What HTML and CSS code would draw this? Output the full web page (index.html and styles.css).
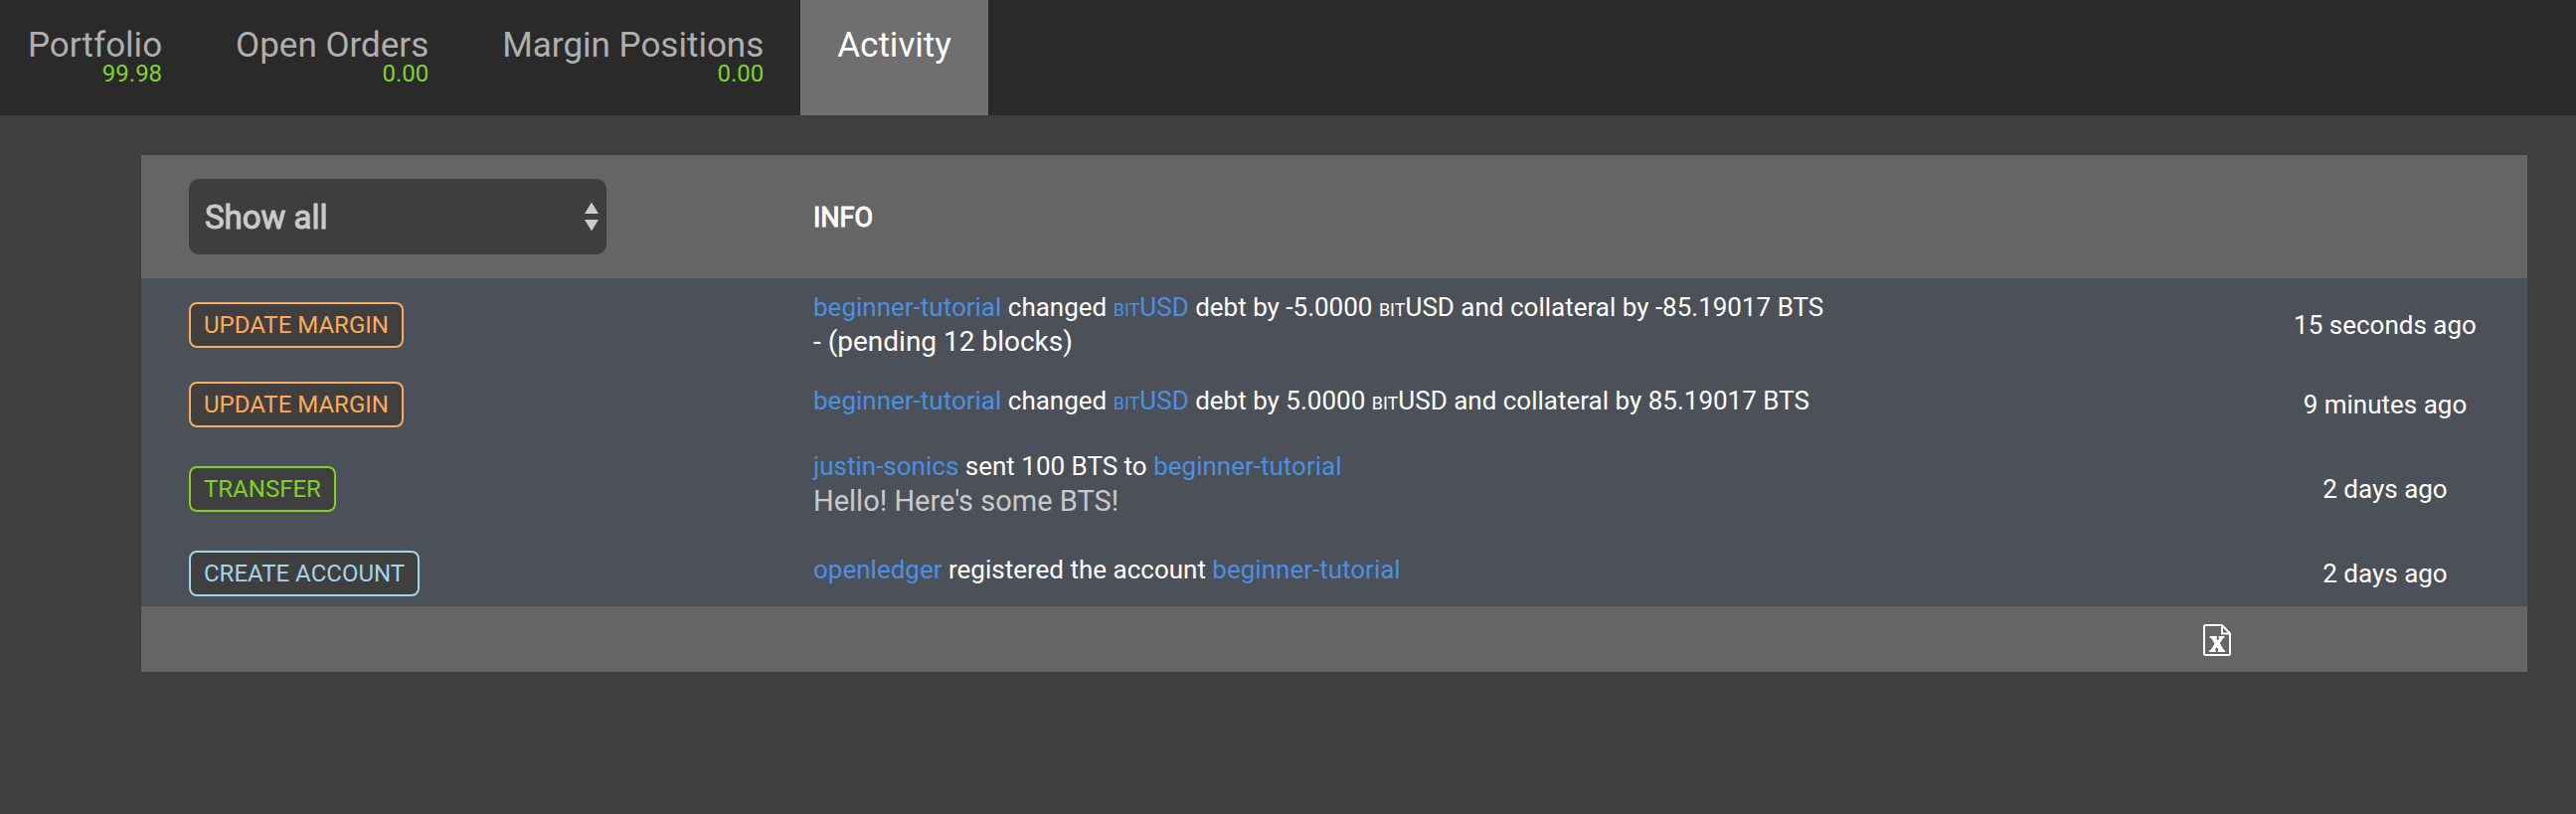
FILE: index.html
```html
<!DOCTYPE html>
<html lang="en">
<head>
<meta charset="utf-8">
<title>Account activity</title>
<link rel="stylesheet" href="styles.css">
</head>
<body>
<nav class="tabs">
  <a class="tab" href="#portfolio"><span class="tab-name">Portfolio</span><span class="tab-value">99.98</span></a>
  <a class="tab" href="#orders"><span class="tab-name">Open Orders</span><span class="tab-value">0.00</span></a>
  <a class="tab" href="#margin"><span class="tab-name">Margin Positions</span><span class="tab-value">0.00</span></a>
  <a class="tab tab-active" href="#activity" aria-current="page"><span class="tab-name">Activity</span></a>
</nav>
<main class="content">
  <table class="activity">
    <colgroup><col class="col-type"><col><col class="col-time"></colgroup>
    <thead>
      <tr>
        <th>
          <div class="filter">
            <select class="filter-select" aria-label="Filter operations">
              <option>Show all</option>
              <option>Transfer</option>
              <option>Update margin</option>
              <option>Create account</option>
            </select>
            <svg class="filter-arrows" viewBox="0 0 14 30" aria-hidden="true"><path d="M7 0.500 14 12H0zM0 18h14L7 29.500z"/></svg>
          </div>
        </th>
        <th class="info-head">INFO</th>
        <th></th>
      </tr>
    </thead>
    <tbody>
      <tr>
        <td class="type"><span class="badge badge-margin">UPDATE MARGIN</span></td>
        <td class="info info-double">
          <p class="line"><a href="#bt">beginner-tutorial</a> changed <a href="#usd"><span class="prefix">BIT</span>USD</a> debt by -5.0000 <span class="prefix">BIT</span>USD and collateral by -85.19017 BTS</p>
          <p class="subline">- (pending 12 blocks)</p>
        </td>
        <td class="time">15 seconds ago</td>
      </tr>
      <tr>
        <td class="type"><span class="badge badge-margin">UPDATE MARGIN</span></td>
        <td class="info">
          <p class="line"><a href="#bt">beginner-tutorial</a> changed <a href="#usd"><span class="prefix">BIT</span>USD</a> debt by 5.0000 <span class="prefix">BIT</span>USD and collateral by 85.19017 BTS</p>
        </td>
        <td class="time">9 minutes ago</td>
      </tr>
      <tr>
        <td class="type"><span class="badge badge-transfer">TRANSFER</span></td>
        <td class="info info-double">
          <p class="line"><a href="#js">justin-sonics</a> sent 100 BTS to <a href="#bt">beginner-tutorial</a></p>
          <p class="subline memo">Hello! Here's some BTS!</p>
        </td>
        <td class="time">2 days ago</td>
      </tr>
      <tr>
        <td class="type"><span class="badge badge-account">CREATE ACCOUNT</span></td>
        <td class="info">
          <p class="line"><a href="#ol">openledger</a> registered the account <a href="#bt">beginner-tutorial</a></p>
        </td>
        <td class="time">2 days ago</td>
      </tr>
    </tbody>
    <tfoot>
      <tr>
        <td></td>
        <td class="export">
          <button class="export-button" type="button" aria-label="Export to spreadsheet">
            <svg class="export-icon" viewBox="0 0 28 32" aria-hidden="true">
              <path class="sheet" d="M19 1H2.500Q1 1 1 2.500v27Q1 31 2.500 31h23q1.500 0 1.500-1.500V9.500zM19 1v8.500h8"/>
              <path class="mark" d="M6.800 12h7v2h-.6l1.500 2.600 1.700-2.600h-.8V12H21.400v2h-1.200l-3.400 5.300 4.100 6.700H22v2h-7.200v-2h.8l-1.900-3-2 3h.9v2H6.200v-2h1.400l3.900-6.200-3.500-5.800H6.800z"/>
            </svg>
          </button>
        </td>
        <td></td>
      </tr>
    </tfoot>
  </table>
</main>
</body>
</html>
```

FILE: styles.css
```css
* { box-sizing: border-box; }

body {
  margin: 0;
  background: #3f3f3f;
  color: #fff;
  font-family: Roboto, "Liberation Sans", sans-serif;
  font-size: 26px;
}

a { color: #4a90e2; text-decoration: none; }
p { margin: 0; }

.tabs {
  display: flex;
  min-height: 116px;
  background: #2a2a2a;
}
.tab {
  display: flex;
  flex-direction: column;
  padding: 28px 37px 32px;
  color: #afafaf;
}
.tab:first-child { padding-left: 28px; }
.tab-active { background: #6f6f6f; color: #fff; }
.tab-name { font-size: 35px; line-height: 36px; }
.tab-value {
  align-self: flex-end;
  color: #7ed331;
  font-size: 24px;
  line-height: 20px;
}

.content { padding: 40px 49px 40px 142px; }

.activity {
  width: 100%;
  table-layout: fixed;
  border-spacing: 0;
  background: #4c5058;
}
.activity th, .activity td { padding: 0; text-align: left; vertical-align: middle; }
.activity thead, .activity tfoot { background: #656565; }
.col-type { width: 628px; }
.col-time { width: 286px; }

.activity th { padding: 24px 48px; }
.filter { position: relative; width: 420px; }
.filter-select {
  display: block;
  width: 100%;
  height: 76px;
  padding: 0 16px;
  border: 0;
  border-radius: 10px;
  appearance: none;
  background: #3e3e3e;
  color: #cbcbcb;
  font: 400 33px Roboto, "Liberation Sans", sans-serif;
  -webkit-text-stroke: 1px;
}
.filter-arrows {
  position: absolute;
  top: 23px;
  right: 8px;
  width: 14px;
  height: 30px;
  fill: #cbcbcb;
  pointer-events: none;
}
.activity .info-head {
  padding-top: 26px;
  font-size: 27px;
  line-height: 32px;
  font-weight: 400;
  -webkit-text-stroke: 1px;
}

.activity .type { padding: 24px 48px 10px; }
.badge {
  display: block;
  width: fit-content;
  padding: 7px 13px;
  border: 2px solid;
  border-radius: 8px;
  background: #3f3f3f;
  font-size: 24px;
  line-height: 28px;
}
.badge-margin { color: #fbab5b; }
.badge-transfer { color: #7ed321; }
.badge-account { color: #a3d4ea; }

.activity .info { padding: 6px 48px 0; }
.activity .info-double { padding-top: 13px; }
.line { line-height: 32px; }
.prefix { font-size: 18px; line-height: 18px; }
.subline { margin-top: 3px; font-size: 28px; line-height: 32px; }
.memo { margin-bottom: 10px; color: #c9c9c9; font-size: 29px; }
.activity .time { padding-top: 14px; text-align: center; line-height: 32px; }

.activity .export { padding: 18px 12px 16px; text-align: right; }
.export-button {
  display: block;
  margin-left: auto;
  padding: 0;
  border: 0;
  background: none;
  cursor: pointer;
}
.export-icon { display: block; width: 28px; height: 32px; }
.sheet { fill: none; stroke: #fff; stroke-width: 2; }
.mark { fill: #fff; }
```
